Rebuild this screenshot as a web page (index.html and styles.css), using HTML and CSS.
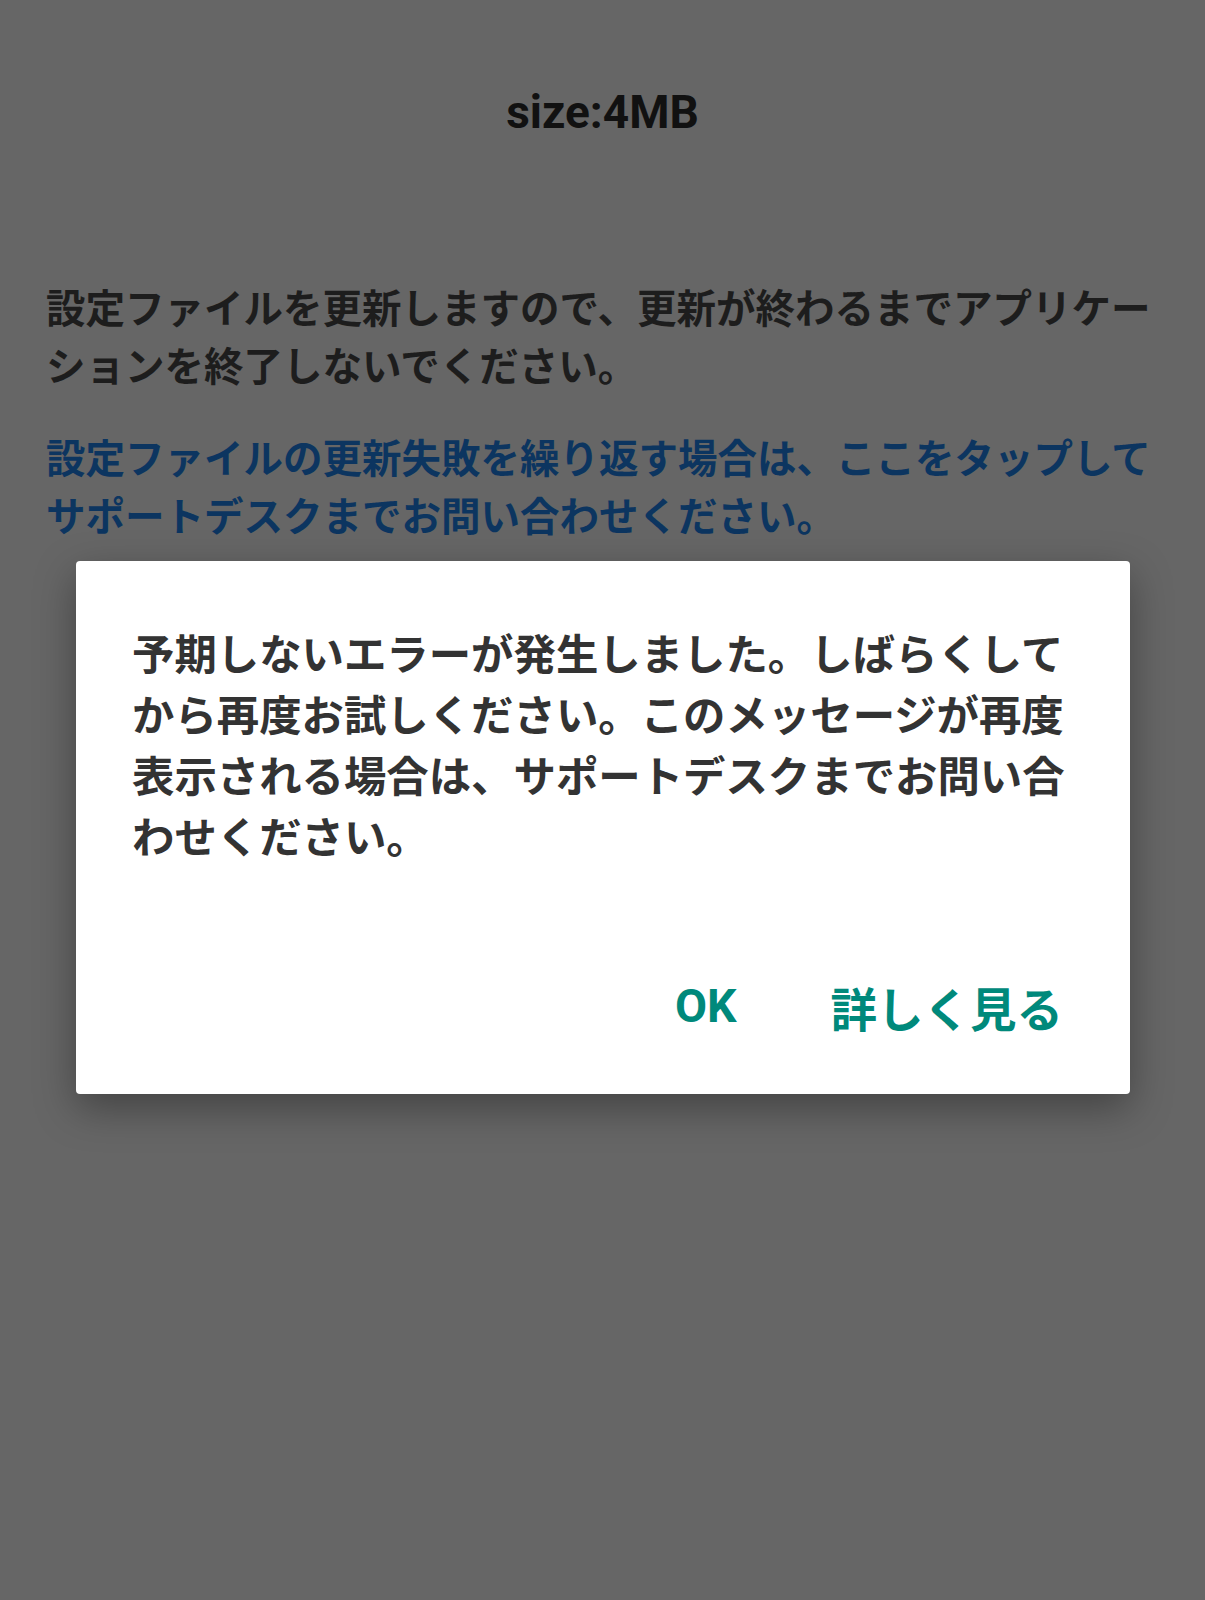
FILE: index.html
```html
<!DOCTYPE html>
<html lang="ja">
<head>
  <meta charset="UTF-8">
  <title>設定ファイル更新</title>
  <link rel="stylesheet" href="styles.css">
</head>
<body>
  <div class="screen">
    <!-- ファイルサイズ -->
    <h1 class="size">size:4MB</h1>

    <div class="notice">
      <p class="msg">設定ファイルを更新しますので、更新が終わるまでアプリケーションを終了しないでください。</p>
      <p class="msg link">設定ファイルの更新失敗を繰り返す場合は、ここをタップしてサポートデスクまでお問い合わせください。</p>
    </div>
  </div>

  <!-- エラーダイアログ -->
  <div class="dialog">
    <p class="dialog-text">予期しないエラーが発生しました。しばらくしてから再度お試しください。このメッセージが再度表示される場合は、サポートデスクまでお問い合わせください。</p>
    <div class="dialog-actions">
      <button class="btn">OK</button>
      <button class="btn">詳しく見る</button>
    </div>
  </div>
</body>
</html>
```

FILE: styles.css
```css
body {
  margin: 0;
  background-color: #666666;
  font-family: Roboto, "Noto Sans CJK JP", sans-serif;
  min-height: 1600px;
  position: relative;
}

.screen {
  padding: 82px 46px 0 46px;
}

/* サイズ表示 */
.size {
  margin: 0;
  text-align: center;
  font-size: 46px;
  line-height: 60px;
  font-weight: bold;
  color: #111111;
}

.notice {
  margin-top: 135px;
}

.msg {
  margin: 0 0 34px 0;
  font-family: "Noto Sans CJK JP", sans-serif;
  font-size: 39.5px;
  line-height: 58px;
  font-weight: bold;
  color: #1d1d1d;
}

.link {
  color: #0c3560;
}

/* ダイアログ */
.dialog {
  position: absolute;
  top: 561px;
  left: 76px;
  width: 1054px;
  box-sizing: border-box;
  padding: 60px 56px 48px 56px;
  background-color: #ffffff;
  border-radius: 4px;
  box-shadow: 0 14px 40px rgba(0, 0, 0, 0.35);
}

.dialog-text {
  margin: 0;
  font-family: "Noto Sans CJK JP", sans-serif;
  font-size: 42.4px;
  line-height: 61px;
  font-weight: bold;
  color: #333333;
}

.dialog-actions {
  display: flex;
  justify-content: flex-end;
  gap: 62px;
  margin-top: 101px;
}

.btn {
  height: 80px;
  padding: 0 16px;
  border: none;
  background: none;
  font-family: Roboto, "Noto Sans CJK JP", sans-serif;
  font-size: 46.5px;
  font-weight: bold;
  color: #00897b;
}

.btn:last-child {
  margin-right: -5px;
}
```
